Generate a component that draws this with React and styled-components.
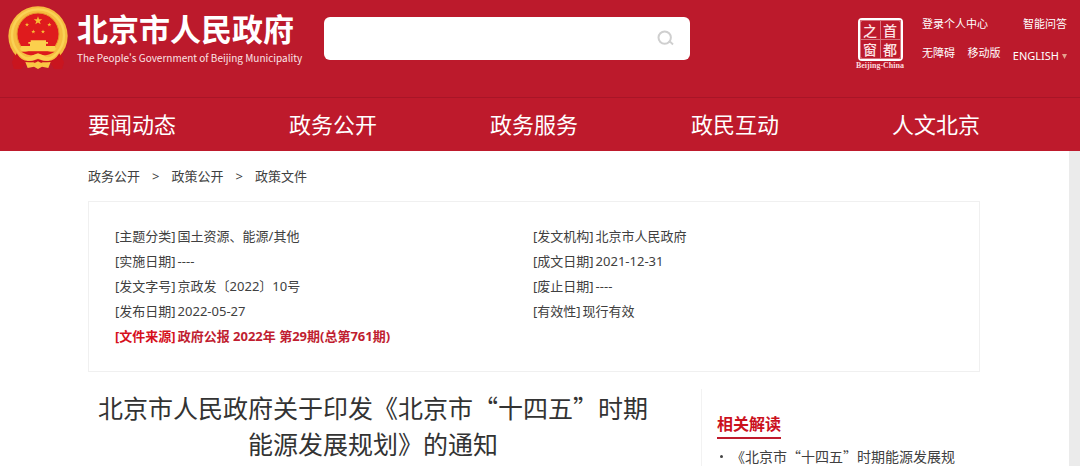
import React from "react";
import styled, { createGlobalStyle } from "styled-components";

const latinFirst = '"Noto Sans", "Noto Sans CJK SC", sans-serif';
const cjkFirst = '"Noto Sans CJK SC", sans-serif';

const Global = createGlobalStyle`
  * { box-sizing: border-box; }
  body { margin: 0; background: #fff; color: #404040; font-family: ${latinFirst}; overflow: hidden; }
  a { color: inherit; text-decoration: none; }
  h1, h2, p, ul, ol, dl, dd, dt { margin: 0; padding: 0; }
  ul, ol { list-style: none; }
`;

const Header = styled.header`
  background: #bc1a2c;
  color: #fff;
`;

const TopBar = styled.div`
  display: flex;
  align-items: flex-start;
  height: 97px;
  padding: 0 13px 0 8px;
`;

const Brand = styled.a`
  display: flex;
  gap: 9px;
  width: 316px;
  flex: none;
  padding-top: 6px;
  svg { flex: none; }
`;

const BrandText = styled.span`
  display: flex;
  flex-direction: column;
  padding-top: 3px;
  white-space: nowrap;
`;

const BrandName = styled.span`
  font: 700 31px/38px ${cjkFirst};
`;

const BrandSub = styled.span`
  font: 10px/22px ${cjkFirst};
  color: #fbe4e6;
`;

const Search = styled.form`
  display: flex;
  align-items: center;
  flex: 0 1 366px;
  height: 43px;
  margin-top: 17px;
  padding-right: 14px;
  background: #fff;
  border-radius: 6px;
`;

const SearchInput = styled.input`
  flex: 1;
  min-width: 0;
  height: 100%;
  padding: 0 14px;
  border: 0;
  outline: 0;
  background: transparent;
  font: 14px ${latinFirst};
`;

const SearchButton = styled.button`
  display: flex;
  padding: 2px;
  border: 0;
  background: none;
`;

const Tools = styled.div`
  display: flex;
  gap: 17px;
  margin-left: auto;
  padding-top: 15px;
`;

const Seal = styled.a`
  display: flex;
  flex-direction: column;
  align-items: center;
  width: 50px;
  padding-top: 3px;
`;

const SealGrid = styled.span`
  display: grid;
  grid-template-columns: 19px 19px;
  grid-template-rows: 18px 18px;
  gap: 1px;
  border: 3px solid #fff;
  border-radius: 4px;
`;

const SealCell = styled.span`
  font: 500 14px/18px ${cjkFirst};
  color: #fce3e5;
  text-align: center;
  box-shadow: 0 0 0 1px #d9727d;
`;

const SealCaption = styled.span`
  font: 700 8px/10px "Liberation Serif", serif;
  color: #fbd9dc;
  white-space: nowrap;
`;

const Links = styled.div`
  display: flex;
  flex-direction: column;
  gap: 11px;
  width: 145px;
  font-size: 11px;
  line-height: 18px;
  white-space: nowrap;
`;

const LinkRow = styled.div`
  display: flex;
  justify-content: space-between;
`;

const LanguageLink = styled.a`
  display: flex;
  align-items: center;
  gap: 3px;
  padding-top: 3px;
`;

const Nav = styled.nav`
  padding: 0 11px 2px 0;
  background: #be1a2c;
  border-top: 1px solid #a81527;
`;

const Wrap = styled.div`
  margin: 0 89px 0 88px;
`;

const NavList = styled.ul`
  display: flex;
  justify-content: space-between;
  font: 22px/51px ${cjkFirst};
`;

const Body = styled.div`
  display: flex;
`;

const Sheet = styled.main`
  flex: 1;
  min-width: 0;
`;

const Gutter = styled.div`
  width: 11px;
  background: #ebebeb;
`;

const Crumbs = styled.ol`
  display: flex;
  gap: 12px;
  padding: 13px 0 12px;
  font-size: 13px;
  line-height: 25px;
`;

const Info = styled.dl`
  display: grid;
  grid-template-columns: 418px 1fr;
  padding: 22px 26px;
  border: 1px solid #f0f0f0;
  min-height: 171px;
  align-content: start;
  font-size: 13px;
  line-height: 25px;
`;

const Field = styled.div`
  display: flex;
  gap: 2px;
  white-space: nowrap;
  ${(p) => p.$strong && "color: #c01d30; font-weight: 700;"}
  dt { ${(p) => p.$strong && "color: #d6101c;"} }
`;

const Columns = styled.div`
  display: flex;
  justify-content: space-between;
  padding-top: 17px;
`;

const Title = styled.h1`
  flex: 0 1 570px;
  text-align: center;
  font: 400 25px/36px ${cjkFirst};
  color: #333;
`;

const Aside = styled.aside`
  width: 279px;
  padding: 20px 0 0 15px;
  border-left: 1px solid #f2f2f2;
`;

const AsideTitle = styled.h2`
  width: max-content;
  font: 700 16px/28px ${cjkFirst};
  color: #cb111d;
  border-bottom: 2px solid #bf1a2c;
`;

const AsideItem = styled.li`
  display: flex;
  align-items: center;
  gap: 8px;
  padding: 4px 0 0 3px;
  font: 14px/26px ${cjkFirst};
  white-space: nowrap;
  &::before { content: ""; width: 3px; height: 3px; border-radius: 2px; background: #444; }
`;

const STAR = "M0 -10 L2.4 -3.2 9.5 -3.1 3.8 1.2 5.9 8.1 0 4 -5.9 8.1 -3.8 1.2 -9.5 -3.1 -2.4 -3.2Z";

function Emblem() {
  return (
    <svg width="60" height="63" viewBox="22 18 180 189" aria-hidden="true">
      <path d="M44 146L36 190L56 200L74 180H150L168 200L188 190L180 146Z" fill="#d0141c" />
      <circle cx="112" cy="108" r="89" fill="#f6bd40" />
      <circle cx="112" cy="106" r="78" fill="none" stroke="#fad255" strokeWidth="7" />
      <circle cx="112" cy="102" r="63" fill="#df1b1d" stroke="#e8962d" strokeWidth="3" />
      <path d={STAR} transform="translate(112 62) scale(1.35)" fill="#f9bd35" />
      <path d={STAR} transform="translate(79 74) scale(.65)" fill="#f9bd35" />
      <path d={STAR} transform="translate(146 74) scale(.65)" fill="#f9bd35" />
      <path d={STAR} transform="translate(98 95) scale(.65)" fill="#f9bd35" />
      <path d={STAR} transform="translate(127 95) scale(.65)" fill="#f9bd35" />
      <path d="M90 121H136V126H142V131H136V138H163V145H168L160 154H64L56 145H61V138H88V131H83V126H90Z" fill="#fbd04d" />
      <path d="M62 155H162Q146 166 126 166L112 160L98 166Q78 166 62 155Z" fill="#dd191c" />
      <path d="M48 160Q66 190 94 181L104 186L76 188L62 208H40L34 186Z" fill="#c9151f" />
      <path d="M176 160Q158 190 130 181L120 186L148 188L162 208H184L190 186Z" fill="#c9151f" />
      <path d="M62 164Q82 178 96 166L112 160L128 166Q142 178 162 164L150 178Q138 186 124 180L112 175L100 180Q86 186 74 178Z" fill="#fbd04d" />
      <path d="M96 182L112 177L128 182L124 188H100Z" fill="#cf151c" />
      <path d="M74 186L102 190L112 184L122 190L150 186L143 204L124 200L112 207L100 200L81 204Z" fill="#f9c744" />
    </svg>
  );
}

const SearchIcon = () => (
  <svg width="17" height="17" viewBox="0 0 17 17" fill="none" stroke="#cfcfcf" strokeWidth="2" aria-hidden="true">
    <circle cx="7.7" cy="7.6" r="6.2" />
    <path d="M11.6 12.2L13 11.6L16 14.4" />
  </svg>
);

const nav = ["要闻动态", "政务公开", "政务服务", "政民互动", "人文北京"];
const crumbs = ["政务公开", "政策公开", "政策文件"];
const fields = [
  ["主题分类", "国土资源、能源/其他"],
  ["发文机构", "北京市人民政府"],
  ["实施日期", "----"],
  ["成文日期", "2021-12-31"],
  ["发文字号", "京政发〔2022〕10号"],
  ["废止日期", "----"],
  ["发布日期", "2022-05-27"],
  ["有效性", "现行有效"],
  ["文件来源", "政府公报 2022年 第29期(总第761期)", true],
];

export default function App() {
  return (
    <div lang="zh-CN">
      <Global />
      <Header>
        <TopBar>
          <Brand href="#">
            <Emblem />
            <BrandText>
              <BrandName>北京市人民政府</BrandName>
              <BrandSub>The People's Government of Beijing Municipality</BrandSub>
            </BrandText>
          </Brand>
          <Search onSubmit={(e) => e.preventDefault()}>
            <SearchInput type="text" aria-label="搜索" />
            <SearchButton type="submit" aria-label="搜索"><SearchIcon /></SearchButton>
          </Search>
          <Tools>
            <Seal href="#">
              <SealGrid>
                {["之", "首", "窗", "都"].map((c) => <SealCell key={c}>{c}</SealCell>)}
              </SealGrid>
              <SealCaption>Beijing-China</SealCaption>
            </Seal>
            <Links>
              <LinkRow>
                <a href="#">登录个人中心</a>
                <a href="#">智能问答</a>
              </LinkRow>
              <LinkRow>
                <a href="#">无障碍</a>
                <a href="#">移动版</a>
                <LanguageLink href="#">
                  ENGLISH
                  <svg width="5" height="5" viewBox="0 0 5 5" aria-hidden="true"><path d="M0 0H5L2.5 5Z" fill="#e3a08c" /></svg>
                </LanguageLink>
              </LinkRow>
            </Links>
          </Tools>
        </TopBar>
        <Nav>
          <Wrap>
            <NavList>{nav.map((t) => <li key={t}><a href="#">{t}</a></li>)}</NavList>
          </Wrap>
        </Nav>
      </Header>
      <Body>
        <Sheet>
          <Wrap>
            <Crumbs>
              {crumbs.map((t, i) => (
                <React.Fragment key={t}>
                  {i > 0 && <li aria-hidden="true">&gt;</li>}
                  <li><a href="#">{t}</a></li>
                </React.Fragment>
              ))}
            </Crumbs>
            <Info>
              {fields.map(([k, v, strong]) => (
                <Field key={k} $strong={strong}><dt>[{k}]</dt><dd>{v}</dd></Field>
              ))}
            </Info>
            <Columns>
              <Title>北京市人民政府关于印发《北京市“十四五”时期能源发展规划》的通知</Title>
              <Aside>
                <AsideTitle>相关解读</AsideTitle>
                <ul><AsideItem><a href="#">《北京市“十四五”时期能源发展规</a></AsideItem></ul>
              </Aside>
            </Columns>
          </Wrap>
        </Sheet>
        <Gutter />
      </Body>
    </div>
  );
}
